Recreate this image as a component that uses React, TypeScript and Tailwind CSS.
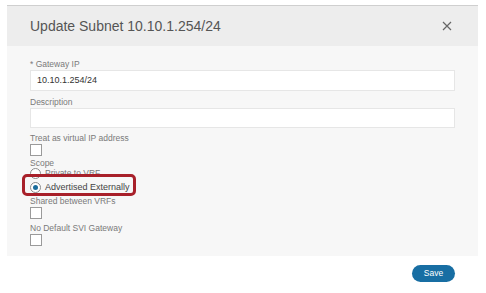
import React from 'react';

const font = { fontFamily: '"Liberation Sans", Arial, sans-serif' };

const Label: React.FC<{ children: React.ReactNode; className?: string }> = ({ children, className = '' }) => (
  <div className={`text-[8.5px] leading-[10px] text-[#7a7a7a] ${className}`}>{children}</div>
);

const Checkbox: React.FC<{ className?: string }> = ({ className = '' }) => (
  <div className={`w-[12px] h-[12px] border border-[#9a9a9a] bg-white ${className}`} />
);

const Radio: React.FC<{ checked?: boolean }> = ({ checked }) => (
  <div className="w-[11px] h-[11px] rounded-full border border-[#8a8a8a] bg-white flex items-center justify-center">
    {checked && <div className="w-[5px] h-[5px] rounded-full bg-[#1b6c9c]" />}
  </div>
);

export default function App() {
  return (
    <div className="w-[486px] h-[293px] bg-white overflow-hidden" style={font}>
      <div className="ml-[7px] mt-[5px] w-[471px] border-t border-[#cfcfcf]">
        {/* header */}
        <div className="h-[40px] bg-[#ededed] flex items-center justify-between pl-[23px] pr-[26px]">
          <span className="text-[14px] text-[#555]">Update Subnet 10.10.1.254/24</span>
          <svg width="10" height="10" viewBox="0 0 10 10" className="mb-[1px]">
            <path d="M1 1 L9 9 M9 1 L1 9" stroke="#666" strokeWidth="1.2" />
          </svg>
        </div>

        {/* body */}
        <div className="relative h-[210px] bg-[#f7f7f7] px-[23px] pt-[13px]">
          <Label>* Gateway IP</Label>
          <div className="mt-[1px] h-[21px] bg-white border border-[#e6e6e6] flex items-center pl-[6px] text-[9px] text-[#333]">
            10.10.1.254/24
          </div>

          <Label className="mt-[6px]">Description</Label>
          <div className="mt-[1px] h-[20px] bg-white border border-[#e6e6e6]" />

          <Label className="mt-[5px]">Treat as virtual IP address</Label>
          <Checkbox className="mt-[1px]" />

          <Label className="mt-[2px]">Scope</Label>
          <div className="flex items-center gap-[4px] h-[11px]">
            <Radio />
            <span className="text-[8.5px] text-[#777]">Private to VRF</span>
          </div>
          <div className="flex items-center gap-[4px] h-[11px] mt-[3px]">
            <Radio checked />
            <span className="text-[9px] text-[#444]">Advertised Externally</span>
          </div>

          <Label className="mt-[3px]">Shared between VRFs</Label>
          <Checkbox className="mt-[1px]" />

          <Label className="mt-[4px]">No Default SVI Gateway</Label>
          <Checkbox className="mt-[1px]" />

          {/* highlight box */}
          <div className="absolute left-[15px] top-[128px] w-[114px] h-[22px] rounded-[5px] border-[3px] border-[#a8202a]" />
        </div>

        {/* footer */}
        <div className="flex justify-end pr-[23px] pt-[9px]">
          <button className="w-[43px] h-[17px] rounded-full bg-[#186ea3] text-white text-[8.5px]">Save</button>
        </div>
      </div>
    </div>
  );
}
